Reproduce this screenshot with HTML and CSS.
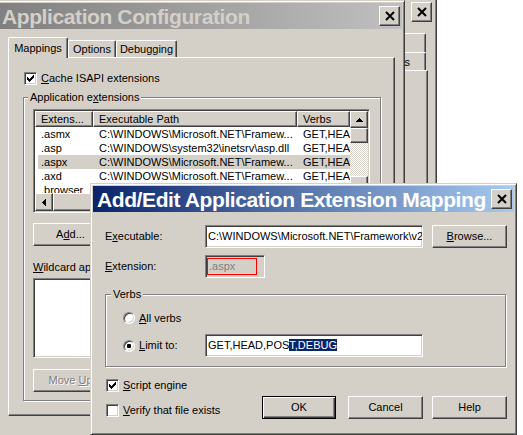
FILE: index.html
```html
<!DOCTYPE html>
<html>
<head>
<meta charset="utf-8">
<title>Application Configuration</title>
<link rel="stylesheet" href="styles.css">
</head>
<body>

<div class="win win-back">
  <div class="title plain">
    <span class="ttext"></span>
    <div class="close raised"><svg width="10" height="10" viewBox="0 0 10 10"><path d="M1 1L9 9M9 1L1 9" stroke="#000" stroke-width="2"/></svg></div>
  </div>
  <div class="btabs btabs1"><div class="btab b1">Home Directory</div></div>
  <div class="btabs btabs2"><div class="btab">Documents</div></div>
  <div class="bpanel"></div>
</div>

<div class="win win-cfg">
  <div class="title inactive">
    <span class="ttext">Application Configuration</span>
    <div class="close raised"><svg width="10" height="10" viewBox="0 0 10 10"><path d="M1 1L9 9M9 1L1 9" stroke="#000" stroke-width="2"/></svg></div>
  </div>
  <div class="tabs">
    <div class="tab active">Mappings</div>
    <div class="tab t-opt">Options</div>
    <div class="tab t-dbg">Debugging</div>
  </div>
  <div class="panel">
    <div class="chkrow">
      <span class="chk sunken"><svg width="7" height="7" viewBox="0 0 7 7" shape-rendering="crispEdges"><path d="M6 0h1v1h-1zM5 1h2v1h-2zM0 2h1v1h-1zM4 2h3v1h-3zM0 3h2v1h-2zM3 3h3v1h-3zM0 4h5v1h-5zM1 5h3v1h-3zM2 6h1v1h-1z"/></svg></span>
      <span><u>C</u>ache ISAPI extensions</span>
    </div>
    <div class="group cfg-group">
      <div class="glabel">Application e<u>x</u>tensions</div>
      <div class="list sunken">
        <div class="lmain">
          <div class="lcols">
            <div class="lhead">
              <div class="raised h1">Extens...</div>
              <div class="raised h2">Executable Path</div>
              <div class="raised h3">Verbs</div>
            </div>
            <div class="lrow"><span class="c1">.asmx</span><span class="c2">C:\WINDOWS\Microsoft.NET\Framew...</span><span class="c3">GET,HEA...</span></div>
            <div class="lrow"><span class="c1">.asp</span><span class="c2">C:\WINDOWS\system32\inetsrv\asp.dll</span><span class="c3">GET,HEA...</span></div>
            <div class="lrow current"><span class="c1">.aspx</span><span class="c2">C:\WINDOWS\Microsoft.NET\Framew...</span><span class="c3">GET,HEA...</span></div>
            <div class="lrow"><span class="c1">.axd</span><span class="c2">C:\WINDOWS\Microsoft.NET\Framew...</span><span class="c3">GET,HEA...</span></div>
            <div class="lrow"><span class="c1">.browser</span><span class="c2">C:\WINDOWS\Microsoft.NET\Framew...</span><span class="c3">GET,HEA...</span></div>
          </div>
          <div class="vscroll">
            <div class="sbtn raised"><svg width="7" height="4" viewBox="0 0 7 4" shape-rendering="crispEdges"><path d="M3 0h1v1h1v1h1v1h1v1H0v-1h1v-1h1v-1h1z"/></svg></div>
            <div class="thumb raised"></div>
            <div class="track"></div>
            <div class="sbtn raised"><svg width="7" height="4" viewBox="0 0 7 4" shape-rendering="crispEdges"><path d="M0 0h7v1h-1v1h-1v1h-1v1h-1v-1h-1v-1h-1v-1h-1z"/></svg></div>
          </div>
        </div>
        <div class="hscroll">
          <div class="sbtn raised"><svg width="4" height="7" viewBox="0 0 4 7" shape-rendering="crispEdges"><path d="M0 3h1v-1h1v-1h1v-1h1v7h-1v-1h-1v-1h-1v-1h-1z"/></svg></div>
          <div class="hthumb raised"></div>
          <div class="track"></div>
          <div class="sbtn raised"><svg width="4" height="7" viewBox="0 0 4 7" shape-rendering="crispEdges"><path d="M0 0h1v1h1v1h1v1h1v1h-1v1h-1v1h-1v1h-1z"/></svg></div>
          <div class="corner"></div>
        </div>
      </div>
      <div class="btn raised cfg-add"><span>A<u>d</u>d...</span></div>
      <div class="wlabel"><u>W</u>ildcard application maps (order of implementation):</div>
      <div class="wlist sunken"></div>
      <div class="btn raised cfg-move disabled"><span>Move <u>U</u>p</span></div>
    </div>
  </div>
</div>

<div class="win win-dlg">
  <div class="title active">
    <span class="ttext">Add/Edit Application Extension Mapping</span>
    <div class="close raised"><svg width="10" height="10" viewBox="0 0 10 10"><path d="M1 1L9 9M9 1L1 9" stroke="#000" stroke-width="2"/></svg></div>
  </div>
  <div class="dbody">
    <div class="frow">
      <span class="flabel">E<u>x</u>ecutable:</span>
      <div class="field sunken f-exe">C:\WINDOWS\Microsoft.NET\Framework\v2</div>
      <div class="btn raised browse"><span><u>B</u>rowse...</span></div>
    </div>
    <div class="frow r-ext">
      <span class="flabel"><u>E</u>xtension:</span>
      <div class="field sunken f-ext"><span class="redbox">.aspx</span></div>
    </div>
    <div class="group verbs">
      <div class="glabel">Verbs</div>
      <div class="rrow r1">
        <span class="rad"></span><span><u>A</u>ll verbs</span>
      </div>
      <div class="rrow r2">
        <span class="ropt"><span class="rad"><span class="dot"></span></span><span><u>L</u>imit to:</span></span>
        <div class="field sunken f-lim">GET,HEAD,POS<span class="hilite">T,DEBUG</span></div>
      </div>
    </div>
    <div class="bottom">
      <div class="checks">
        <div class="chkrow">
          <span class="chk sunken"><svg width="7" height="7" viewBox="0 0 7 7" shape-rendering="crispEdges"><path d="M6 0h1v1h-1zM5 1h2v1h-2zM0 2h1v1h-1zM4 2h3v1h-3zM0 3h2v1h-2zM3 3h3v1h-3zM0 4h5v1h-5zM1 5h3v1h-3zM2 6h1v1h-1z"/></svg></span>
          <span><u>S</u>cript engine</span>
        </div>
        <div class="chkrow">
          <span class="chk sunken"></span>
          <span><u>V</u>erify that file exists</span>
        </div>
      </div>
      <div class="btns">
        <div class="btn btn-ok"><span>OK</span></div>
        <div class="btn raised btn-cancel"><span>Cancel</span></div>
        <div class="btn raised btn-help"><span>Help</span></div>
      </div>
    </div>
  </div>
</div>

</body>
</html>
```

FILE: styles.css
```css
* { box-sizing: border-box; }
html, body { margin: 0; padding: 0; }
body {
  width: 523px;
  height: 435px;
  overflow: hidden;
  position: relative;
  background: #fff;
  font-family: "Liberation Sans", Arial, sans-serif;
  font-size: 11px;
  line-height: 13px;
  color: #000;
}
svg { display: block; }

/* generic 3D styles */
.raised {
  background: #d4d0c8;
  border: 1px solid;
  border-color: #fff #404040 #404040 #fff;
  box-shadow: inset -1px -1px #808080;
}
.sunken {
  background: #fff;
  border: 1px solid;
  border-color: #808080 #fff #fff #808080;
  box-shadow: inset 1px 1px #404040, inset -1px -1px #d4d0c8;
}

/* windows */
.win {
  position: absolute;
  background: #d4d0c8;
  border: 1px solid;
  border-color: #d4d0c8 #404040 #404040 #d4d0c8;
  box-shadow: inset 1px 1px #fff, inset -1px -1px #808080;
  padding: 2px;
}
.win-back { left: 30px; top: -4px; width: 407px; height: 200px; }
.win-cfg { left: -3px; top: 0; width: 408px; height: 450px; }
.win-dlg { left: 90px; top: 183px; width: 427px; height: 252px; }

.title {
  height: 26px;
  display: flex;
  align-items: center;
  justify-content: space-between;
  font-weight: bold;
  font-size: 21px;
  line-height: 26px;
  letter-spacing: -0.4px;
  white-space: nowrap;
  overflow: hidden;
}
.ttext { padding-top: 2px; }
.title.plain { background: #d4d0c8; }
.title.inactive { background: linear-gradient(to right, #808080, #c0c0c0); color: #d4d0c8; padding-left: 2px; }
.title.active { background: linear-gradient(to right, #0a246a, #a6caf0); color: #fff; padding-left: 4px; }
.close {
  flex: none;
  width: 21px;
  height: 20px;
  margin-right: 2px;
  display: flex;
  align-items: center;
  justify-content: center;
  letter-spacing: 0;
}

/* back window */
.btabs { display: flex; justify-content: flex-end; padding-right: 8px; }
.btabs1 { margin-top: 8px; height: 19px; }
.btabs2 { height: 18px; }
.btab {
  width: 100px;
  border: 1px solid;
  border-bottom: 0;
  border-color: #fff #404040 #fff #fff;
  box-shadow: inset -1px 0 #808080;
  border-radius: 2px 2px 0 0;
  text-align: right;
  padding: 3px 15px 0 0;
  white-space: nowrap;
  overflow: hidden;
}
.btab.b1 { padding-right: 26px; }
.bpanel {
  height: 140px;
  margin-right: 6px;
  border: 1px solid;
  border-color: #fff #404040 #404040 #fff;
  box-shadow: inset -1px -1px #808080;
}

/* tabs */
.tabs { display: flex; align-items: flex-end; height: 20px; margin: 8px 0 0 8px; }
.tab {
  height: 17px;
  border: 1px solid;
  border-bottom: 0;
  border-color: #fff #404040 #fff #fff;
  box-shadow: inset -1px 0 #808080;
  border-radius: 2px 2px 0 0;
  text-align: center;
  padding-top: 2px;
  background: #d4d0c8;
}
.tab.active {
  width: 60px;
  height: 21px;
  margin-bottom: -1px;
  padding-top: 4px;
  position: relative;
  z-index: 1;
}
.t-opt { width: 48px; }
.t-dbg { width: 61px; }
.panel {
  margin-left: 8px;
  width: 387px;
  height: 359px;
  border: 1px solid;
  border-color: #fff #404040 #404040 #fff;
  box-shadow: inset -1px -1px #808080;
  padding: 14px 0 0 15px;
}

/* checkbox */
.chkrow { display: flex; align-items: center; height: 13px; white-space: nowrap; }
.chk {
  width: 13px;
  height: 13px;
  flex: none;
  display: flex;
  align-items: center;
  justify-content: center;
  margin-right: 4px;
}

/* group boxes */
.group {
  border: 1px solid #808080;
  box-shadow: inset 1px 1px #fff, 1px 1px #fff;
}
.glabel {
  background: #d4d0c8;
  padding: 0 2px;
  width: max-content;
  margin-top: -7px;
}
.cfg-group { margin: 12px 0 0 -1px; width: 358px; height: 304px; padding-left: 9px; }
.cfg-group .glabel { margin-left: -5px; }

/* list view */
.list { margin-top: 5px; width: 337px; height: 104px; padding: 1px; display: flex; flex-direction: column; }
.lmain { display: flex; height: 82px; }
.lcols { width: 315px; overflow: hidden; }
.lhead { display: flex; height: 16px; }
.lhead > div { padding-left: 5px; line-height: 14px; white-space: nowrap; overflow: hidden; }
.h1 { width: 58px; }
.h2 { width: 204px; }
.h3 { width: 53px; }
.lrow { display: flex; height: 14px; line-height: 14px; margin-left: 3px; white-space: nowrap; }
.lrow.current { background: #d4d0c8; }
.c1 { width: 55px; padding-left: 3px; flex: none; }
.c2 { width: 204px; padding-left: 6px; overflow: hidden; flex: none; }
.c3 { width: 53px; padding-left: 6px; overflow: hidden; flex: none; }
.vscroll { width: 18px; display: flex; flex-direction: column; }
.sbtn { width: 18px; height: 17px; flex: none; display: flex; align-items: center; justify-content: center; }
.thumb { height: 15px; flex: none; }
.track { flex: 1; background: repeating-conic-gradient(#d4d0c8 0 25%, #fff 0 50%) 0 0 / 2px 2px; }
.hscroll { display: flex; height: 18px; }
.hscroll .sbtn { height: 18px; }
.hthumb { width: 150px; flex: none; }
.corner { width: 18px; flex: none; background: #d4d0c8; }

/* buttons */
.btn { height: 23px; width: 75px; flex: none; display: flex; align-items: center; justify-content: center; white-space: nowrap; }
.cfg-add { margin-top: 10px; }
.wlabel { margin-top: 15px; white-space: nowrap; }
.wlist { margin-top: 4px; width: 337px; height: 80px; }
.cfg-move { margin-top: 11px; }
.disabled { color: #808080; text-shadow: 1px 1px 0 #fff; }

/* dialog */
.dbody { padding: 13px 7px 0 12px; }
.frow { display: flex; align-items: center; height: 23px; }
.flabel { width: 100px; flex: none; }
.field { height: 23px; padding: 4px 0 0 2px; white-space: nowrap; overflow: hidden; flex: none; }
.f-exe { width: 218px; }
.browse { margin-left: 9px; }
.r-ext { margin-top: 7px; }
.f-ext { width: 60px; background: #d4d0c8; padding: 2px 0 0 1px; color: #808080; }
.redbox { display: block; width: 50px; height: 17px; border: 1px solid #f00; line-height: 15px; padding-left: 1px; }
.verbs { margin-top: 16px; width: 401px; height: 73px; padding-left: 17px; }
.verbs .glabel { margin-left: -12px; }
.rrow { display: flex; align-items: center; white-space: nowrap; }
.r1 { margin-top: 10px; height: 14px; }
.r2 { margin-top: 9px; height: 23px; }
.ropt { width: 82px; flex: none; display: flex; align-items: center; }
.rad {
  width: 12px;
  height: 12px;
  flex: none;
  border-radius: 50%;
  background: #fff;
  border: 1px solid;
  border-color: #808080 #fff #fff #808080;
  box-shadow: inset 1px 1px #404040, inset -1px -1px #d4d0c8;
  margin-right: 4px;
  display: flex;
  align-items: center;
  justify-content: center;
}
.dot { width: 4px; height: 4px; border-radius: 1px; background: #000; }
.f-lim { width: 218px; }
.hilite { background: #0a246a; color: #fff; }
.bottom { display: flex; }
.checks { padding-left: 1px; }
.checks .chkrow { margin-top: 12px; }
.btns { margin-left: auto; margin-top: 29px; display: flex; }
.btn-ok {
  width: 74px;
  border: 1px solid #000;
  background: #d4d0c8;
  box-shadow: inset 1px 1px #fff, inset -1px -1px #404040, inset -2px -2px #808080;
}
.btn-cancel { margin-left: 12px; }
.btn-help { margin-left: 9px; }
```
